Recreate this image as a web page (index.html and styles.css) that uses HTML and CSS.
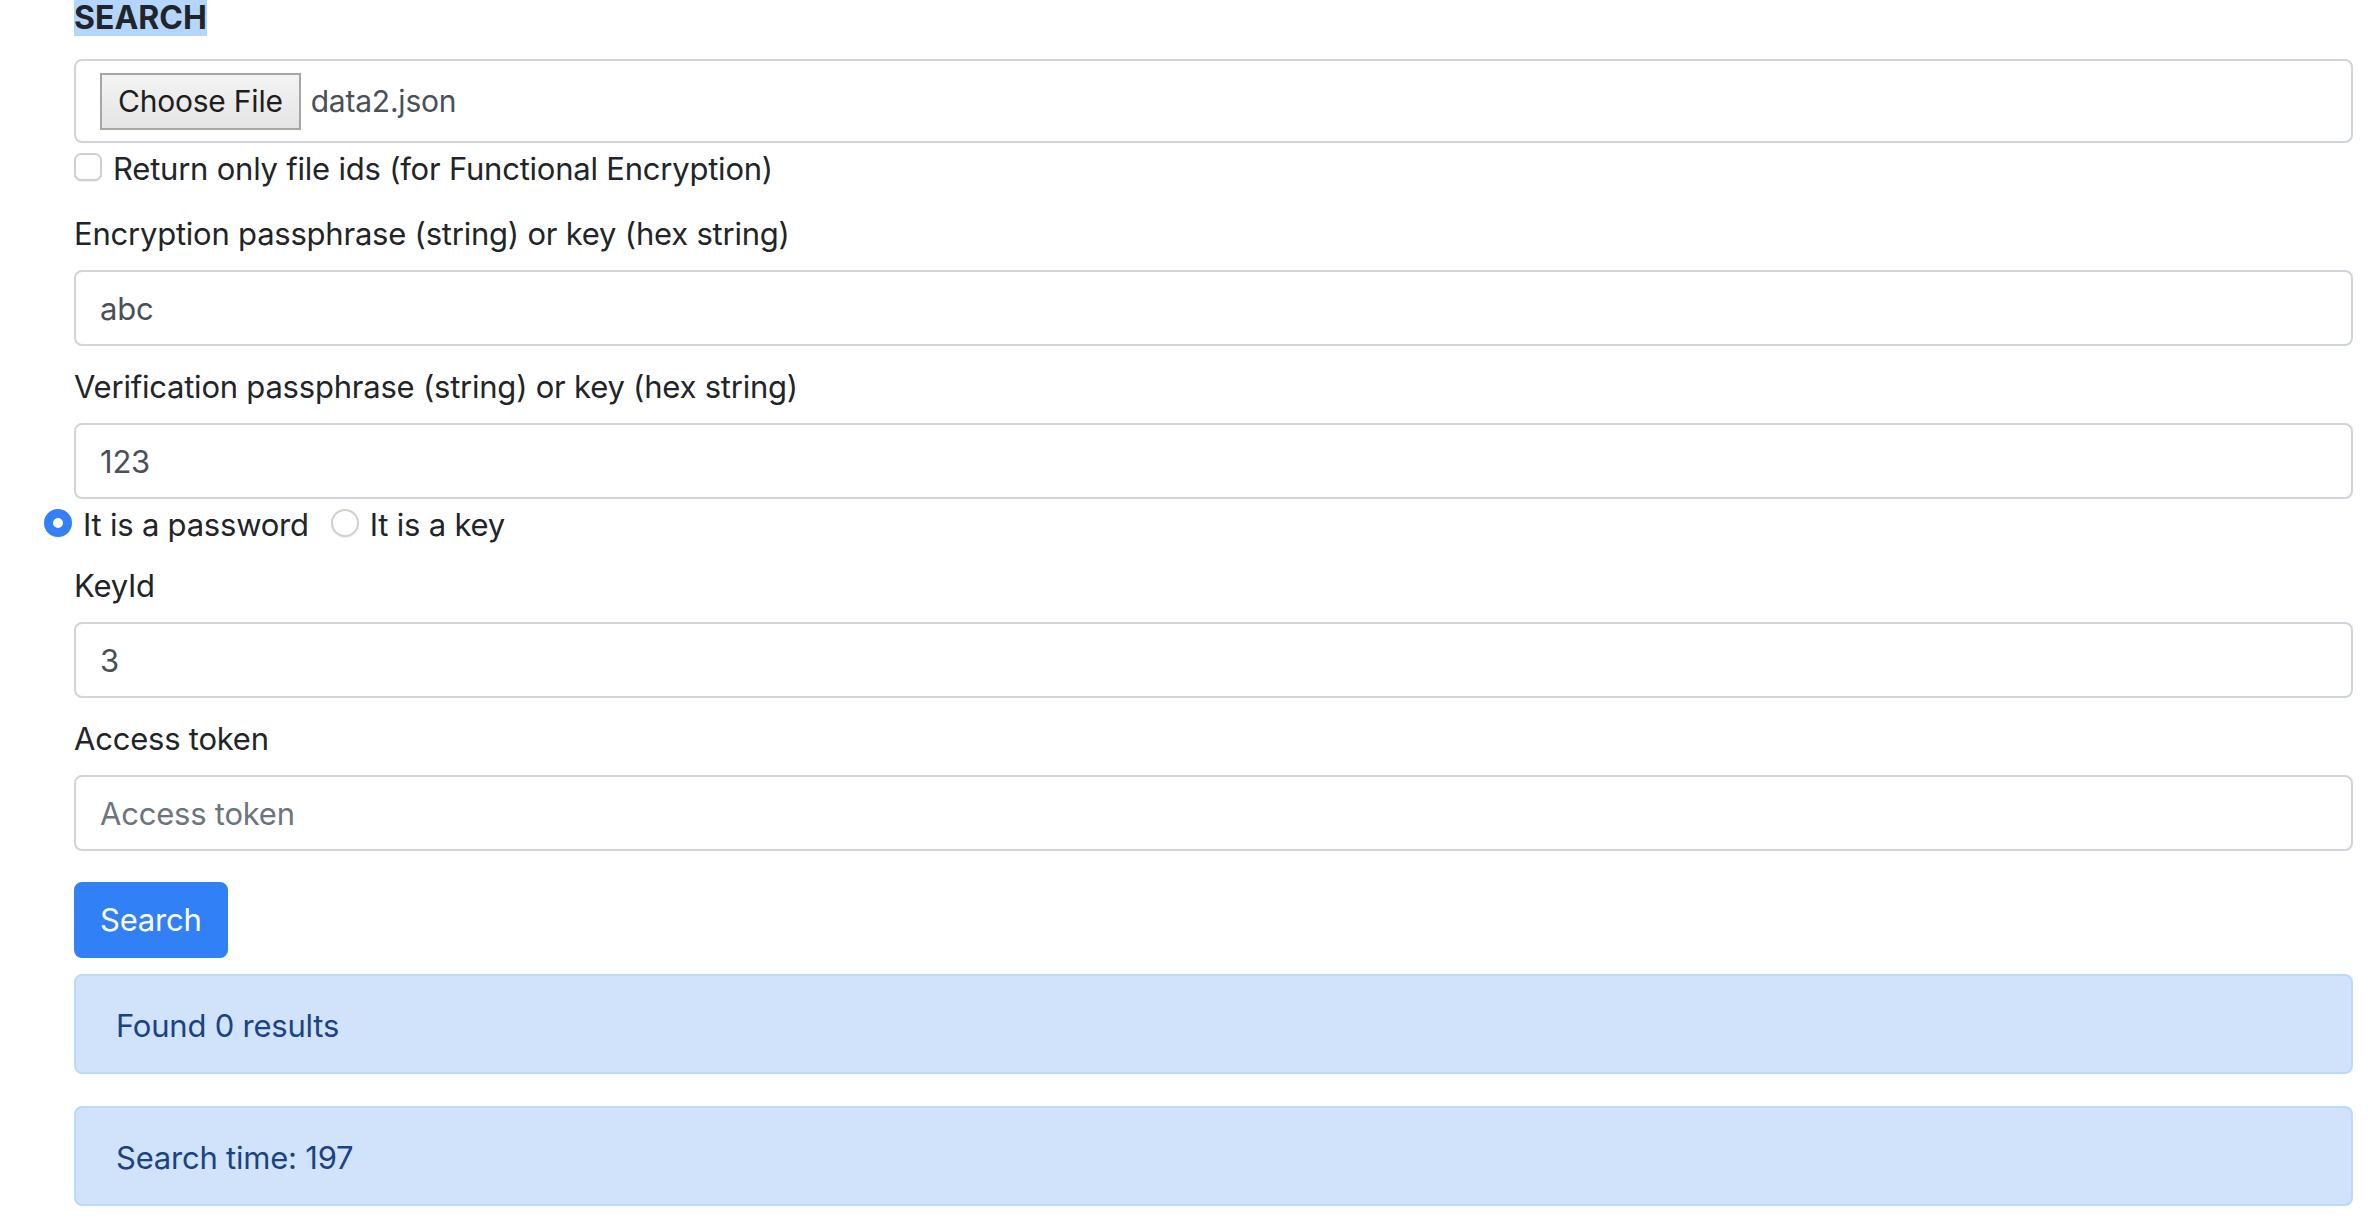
FILE: index.html
```html
<!DOCTYPE html>
<html lang="en">
<head>
<meta charset="utf-8">
<title>Search</title>
<link rel="stylesheet" href="styles.css">
</head>
<body>
<main class="page">
  <h5 class="title"><span class="sel">SEARCH</span></h5>

  <div class="file-box">
    <span class="file-btn">Choose File</span>
    <span class="file-name">data2.json</span>
  </div>

  <label class="check-row">
    <input type="checkbox" class="checkbox">
    <span class="row-text">Return only file ids (for Functional Encryption)</span>
  </label>

  <label class="field-label first">Encryption passphrase (string) or key (hex string)</label>
  <input class="form-control" type="text" value="abc">

  <label class="field-label">Verification passphrase (string) or key (hex string)</label>
  <input class="form-control" type="text" value="123">

  <div class="radio-row">
    <label class="radio-item"><input type="radio" name="kind" class="radio" checked><span class="row-text">It is a password</span></label>
    <label class="radio-item"><input type="radio" name="kind" class="radio"><span class="row-text">It is a key</span></label>
  </div>

  <label class="field-label keyid">KeyId</label>
  <input class="form-control" type="text" value="3">

  <label class="field-label">Access token</label>
  <input class="form-control" type="text" placeholder="Access token">

  <button class="btn-primary" type="button">Search</button>

  <div class="alert">Found 0 results</div>
  <div class="alert second">Search time: 197</div>
</main>
</body>
</html>
```

FILE: styles.css
```css
* { box-sizing: border-box; }

html, body {
  margin: 0;
  padding: 0;
  background: #ffffff;
}

body {
  font-family: Inter, "Noto Sans", "Liberation Sans", sans-serif;
  font-size: 31px;
  letter-spacing: -0.22px;
  line-height: 48px;
  color: #212529;
}

.page {
  display: flex;
  flex-direction: column;
  align-items: stretch;
  padding: 0 15px 0 74px;
}

.title {
  margin: 0;
  font-size: 32px;
  letter-spacing: 0;
  line-height: 36px;
  font-weight: 700;
  color: #212529;
}

.sel {
  background: #b4d5fe;
  display: inline-block;
  height: 36px;
}

.file-box {
  margin-top: 23px;
  height: 84px;
  border: 2px solid #ced4da;
  border-radius: 8px;
  padding: 0 24px;
  display: flex;
  align-items: center;
  gap: 10px;
}

.file-btn {
  height: 57px;
  padding: 0 16px;
  display: flex;
  align-items: center;
  border: 2px solid #a6a6a6;
  background: linear-gradient(#f3f3f3, #e5e5e5);
  color: #1e1e1e;
  font-size: 30px;
}

.file-name {
  color: #495057;
  font-size: 30px;
}

.check-row {
  height: 48px;
  display: flex;
  align-items: center;
  gap: 11px;
}

.row-text {
  padding-top: 3px;
  line-height: 45px;
}

.checkbox {
  appearance: none;
  margin: 0;
  width: 28px;
  height: 28px;
  border: 2px solid #cfcfcf;
  border-radius: 7px;
  background: #fff;
  box-shadow: 0 1px 1px rgba(0,0,0,0.06);
}

.field-label {
  display: block;
  margin-top: 15px;
  margin-bottom: 14px;
  padding-top: 3px;
  line-height: 45px;
}

.field-label.first { margin-top: 17px; }
.field-label.keyid { margin-top: 13px; }

.form-control {
  display: block;
  width: 100%;
  height: 76px;
  margin: 0;
  padding: 0 24px;
  border: 2px solid #ced4da;
  border-radius: 8px;
  font-family: inherit;
  font-size: 31px;
  letter-spacing: -0.22px;
  color: #495057;
  background: #fff;
  outline: none;
}

.form-control::placeholder { color: #6c757d; opacity: 1; }

.radio-row {
  height: 48px;
  margin-left: -30px;
  display: flex;
  align-items: center;
  gap: 22px;
}

.radio-item {
  display: flex;
  align-items: center;
  gap: 11px;
}

.radio {
  appearance: none;
  margin: 0;
  width: 28px;
  height: 28px;
  border-radius: 50%;
  border: 2px solid #d0d0d0;
  background: #fff;
  box-shadow: 0 1px 1px rgba(0,0,0,0.06);
}

.radio:checked {
  border: 9px solid #3580f6;
  background: #fff;
}

.btn-primary {
  align-self: flex-start;
  margin-top: 31px;
  height: 76px;
  padding: 0 24px;
  border: 2px solid #3180f6;
  border-radius: 8px;
  background: #3180f6;
  color: #fff;
  font-family: inherit;
  font-size: 31px;
  letter-spacing: -0.22px;
  line-height: 48px;
}

.alert {
  margin-top: 16px;
  height: 100px;
  padding: 27px 40px 21px;
  border: 2px solid #bcd9fb;
  border-radius: 8px;
  background: #d0e3fa;
  color: #1b4384;
  line-height: 45px;
}

.alert.second { margin-top: 32px; }
```
